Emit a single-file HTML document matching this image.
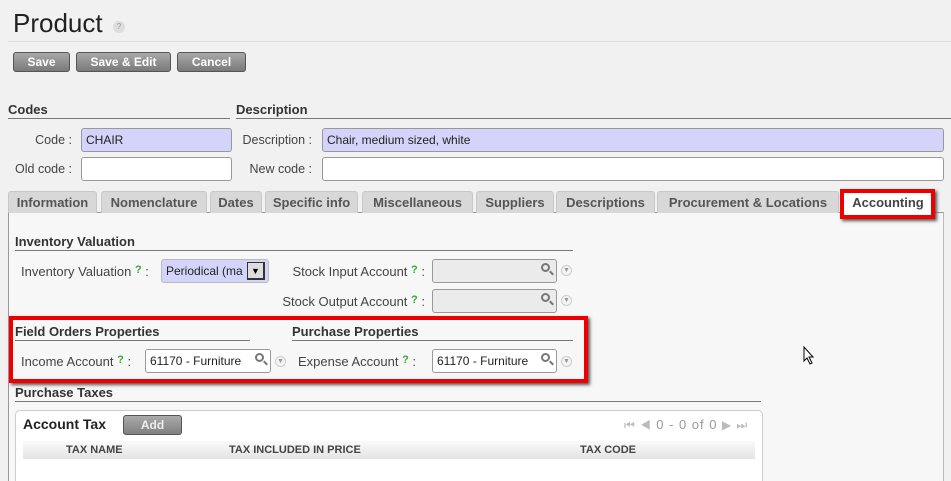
<!DOCTYPE html>
<html style="width:951px;height:481px;overflow:hidden"><head><style>
*{box-sizing:border-box;margin:0;padding:0}
body{width:951px;height:481px;overflow:hidden;background:#f2f1f2;font-family:"Liberation Sans",sans-serif;font-size:12px;color:#333;position:relative}
.a{position:absolute}
.btn{position:absolute;top:52px;height:20px;border:1px solid #555;border-radius:3px;background:linear-gradient(#a8a8a8,#7a7a7a);color:#fff;font-weight:bold;font-size:12px;text-align:center;line-height:18px}
.h{position:absolute;font-weight:bold;font-size:13px;color:#333;border-bottom:1px solid #777;padding-bottom:1px}
.lbl{position:absolute;font-size:12.5px;color:#444;text-align:right;white-space:nowrap}
.p .lbl{font-size:13px}
.inp{position:absolute;border:1px solid #999;border-radius:3px;background:#fff;padding-left:4px;font-size:12px;color:#222;white-space:nowrap;overflow:hidden}
.lav{background:#d4d4fa}
.tab{position:absolute;top:191px;height:22px;background:#d8d8d8;border:1px solid #c8c8c8;border-bottom:none;border-radius:3px 3px 0 0;font-weight:bold;font-size:13px;color:#555;text-align:center;line-height:22px}
.q{color:#3a3;font-weight:bold;font-size:11px;vertical-align:top}
.dd{position:absolute;width:11px;height:11px;border-radius:50%;border:1px solid #ccc;background:#f4f4f4;font-size:7px;color:#999;text-align:center;line-height:10px}
.mag{position:absolute;width:9px;height:9px;border:2px solid #777;border-radius:50%}
.mag:after{content:"";position:absolute;left:6px;top:7px;width:5px;height:2px;background:#777;transform:rotate(45deg)}
.red{position:absolute;border:4px solid #e00;box-shadow:2px 2px 3px #555}
</style></head><body>
<div class="a" style="left:13px;top:8px;font-size:26px;color:#222">Product</div>
<div class="a" style="left:113px;top:21px;width:12px;height:12px;border-radius:50%;background:#ddd;color:#999;font-size:8px;text-align:center;line-height:12px">?</div>
<div class="a" style="left:8px;top:41px;width:943px;height:1px;background:#ddd"></div>
<div class="btn" style="left:13px;width:57px">Save</div>
<div class="btn" style="left:76px;width:95px">Save &amp; Edit</div>
<div class="btn" style="left:177px;width:69px">Cancel</div>

<div class="h" style="left:8px;top:102px;width:222px">Codes</div>
<div class="h" style="left:236px;top:102px;width:715px">Description</div>
<div class="lbl" style="left:6px;top:133px;width:66px">Code :</div>
<div class="inp lav" style="left:81px;top:128px;width:151px;height:24px;line-height:22px">CHAIR</div>
<div class="lbl" style="left:6px;top:162px;width:66px">Old code :</div>
<div class="inp" style="left:81px;top:157px;width:151px;height:24px"></div>
<div class="lbl" style="left:230px;top:133px;width:82px">Description :</div>
<div class="inp lav" style="left:322px;top:128px;width:622px;height:24px;line-height:22px">Chair, medium sized, white</div>
<div class="lbl" style="left:230px;top:162px;width:82px">New code :</div>
<div class="inp" style="left:322px;top:157px;width:622px;height:24px"></div>

<div class="a" style="left:8px;top:212px;width:936px;height:280px;background:#f7f7f7;border:1px solid #999;border-right:1px solid #bbb"></div>
<div class="tab" style="left:8px;width:89px">Information</div>
<div class="tab" style="left:101px;width:106px">Nomenclature</div>
<div class="tab" style="left:210px;width:52px">Dates</div>
<div class="tab" style="left:265px;width:93px">Specific info</div>
<div class="tab" style="left:362px;width:111px">Miscellaneous</div>
<div class="tab" style="left:476px;width:78px">Suppliers</div>
<div class="tab" style="left:556px;width:99px">Descriptions</div>
<div class="tab" style="left:657px;width:182px">Procurement &amp; Locations</div>
<div class="tab" style="left:843px;width:90px;background:#fff;height:23px;color:#444">Accounting</div>
<div class="red" style="left:840px;top:189px;width:95px;height:30px"></div>

<div class="p">
<div class="h" style="left:15px;top:234px;width:558px">Inventory Valuation</div>
<div class="lbl" style="left:21px;top:264px;text-align:left">Inventory Valuation <span class="q">?</span> :</div>
<div class="inp lav" style="left:161px;top:259px;width:108px;height:24px;line-height:22px;border-color:#bbb">Periodical (ma</div>
<div class="a" style="left:247px;top:262px;width:18px;height:18px;background:#ddd;border:1px solid #333;border-right-width:2px;border-bottom-width:2px;font-size:9px;text-align:center;line-height:16px;color:#000">▼</div>
<div class="lbl" style="left:250px;top:264px;width:175px">Stock Input Account <span class="q">?</span> :</div>
<div class="inp" style="left:432px;top:259px;width:125px;height:24px;background:#ebebeb"></div>
<div class="mag" style="left:541px;top:263px"></div><div class="dd" style="left:561px;top:265px">▼</div>
<div class="lbl" style="left:230px;top:294px;width:195px">Stock Output Account <span class="q">?</span> :</div>
<div class="inp" style="left:432px;top:289px;width:125px;height:24px;background:#ebebeb"></div>
<div class="mag" style="left:541px;top:293px"></div><div class="dd" style="left:561px;top:295px">▼</div>

<div class="h" style="left:15px;top:324px;width:235px">Field Orders Properties</div>
<div class="h" style="left:292px;top:324px;width:281px">Purchase Properties</div>
<div class="lbl" style="left:21px;top:354px;text-align:left">Income Account <span class="q">?</span> :</div>
<div class="inp" style="left:145px;top:349px;width:126px;height:24px;line-height:22px">61170 - Furniture</div>
<div class="mag" style="left:255px;top:353px"></div><div class="dd" style="left:275px;top:356px">▼</div>
<div class="lbl" style="left:298px;top:354px;text-align:left">Expense Account <span class="q">?</span> :</div>
<div class="inp" style="left:432px;top:349px;width:125px;height:24px;line-height:22px">61170 - Furniture</div>
<div class="mag" style="left:541px;top:353px"></div><div class="dd" style="left:561px;top:356px">▼</div>
</div>
<div class="red" style="left:9px;top:316px;width:579px;height:67px"></div>

<div class="h" style="left:15px;top:385px;width:746px">Purchase Taxes</div>
<div class="a" style="left:15px;top:410px;width:748px;height:90px;background:#fff;border:1px solid #ccc;border-radius:5px"></div>
<div class="a" style="left:23px;top:416px;font-size:14px;font-weight:bold;color:#222">Account Tax</div>
<div class="a" style="left:123px;top:415px;width:59px;height:20px;border:1px solid #555;border-radius:3px;background:linear-gradient(#aaa,#808080);color:#eee;font-weight:bold;text-align:center;line-height:18px">Add</div>
<div class="a" style="left:624px;top:417px;color:#bbb;font-size:12px;letter-spacing:1px">⏮ ◀ <span style="color:#999;font-size:13px">0 - 0 of 0</span> ▶ ⏭</div>
<div class="a" style="left:23px;top:441px;width:732px;height:18px;background:linear-gradient(#fafafa,#e4e4e4);font-size:11px;font-weight:bold;color:#444;line-height:18px">
<span class="a" style="left:43px">TAX NAME</span><span class="a" style="left:206px">TAX INCLUDED IN PRICE</span><span class="a" style="left:557px">TAX CODE</span></div>
<svg class="a" style="left:803px;top:346px" width="12" height="19" viewBox="0 0 12 19"><path d="M1 1 L1 15 L4 12 L7 18 L9 17 L6 11 L10 11 Z" fill="#fff" stroke="#000" stroke-width="1"/></svg>
</body></html>
